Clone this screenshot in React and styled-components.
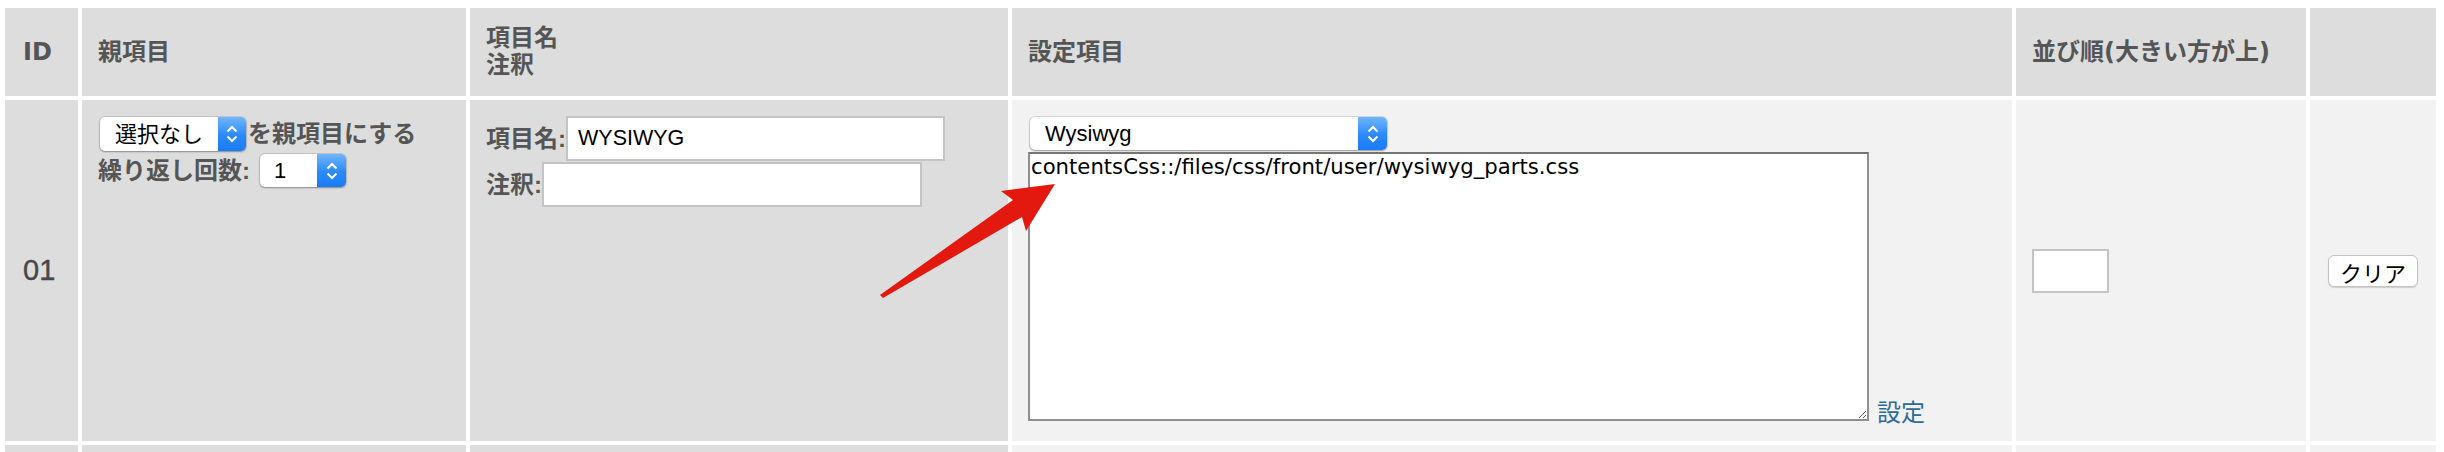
import React from 'react';
import styled, { createGlobalStyle } from 'styled-components';

const SANS = `"Liberation Sans", "Noto Sans CJK JP", sans-serif`;
const WIDE = `"DejaVu Sans", "Noto Sans CJK JP", sans-serif`;

const GlobalStyle = createGlobalStyle`
  html, body {
    margin: 0;
    padding: 0;
    background: #fff;
    overflow: hidden;
  }
`;

const columns = [
  { key: 'id', label: 'ID', width: 73 },
  { key: 'parent', label: '親項目', width: 384 },
  { key: 'name', label: ['項目名', '注釈'], width: 538 },
  { key: 'setting', label: '設定項目', width: 1000 },
  { key: 'order', label: '並び順(大きい方が上)', width: 290 },
  { key: 'action', label: '', width: 126 },
];

export default function App() {
  return (
    <Page>
      <GlobalStyle />
      <Table>
        <colgroup>
          {columns.map((c) => (
            <col key={c.key} style={{ width: c.width }} />
          ))}
        </colgroup>
        <thead>
          <HeadRow>
            {columns.map((c) => (
              <Th key={c.key}>
                {Array.isArray(c.label)
                  ? c.label.map((l, i) => <div key={i}>{l}</div>)
                  : c.label}
              </Th>
            ))}
          </HeadRow>
        </thead>
        <tbody>
          <BodyRow $h={341}>
            <Td $middle>
              <IdText>01</IdText>
            </Td>
            <Td>
              <Line>
                <Select width={146} height={34} stepper={28} value="選択なし" />
                <Label>を親項目にする</Label>
              </Line>
              <Line $gap={2}>
                <Label>繰り返し回数:</Label>
                <Select width={86} height={33} stepper={29} value="1" ml={10} pl={14} />
              </Line>
            </Td>
            <Td>
              <Line>
                <Label>項目名:</Label>
                <TextInput $w={379} $h={45} defaultValue="WYSIWYG" />
              </Line>
              <Line $gap={1}>
                <Label>注釈:</Label>
                <TextInput $w={380} $h={45} defaultValue="" />
              </Line>
            </Td>
            <Td $light>
              <SettingStack>
                <Select width={357} height={33} stepper={29} value="Wysiwyg" />
                <TextRow>
                  <TextArea defaultValue="contentsCss::/files/css/front/user/wysiwyg_parts.css" />
                  <SettingLink href="#">設定</SettingLink>
                </TextRow>
              </SettingStack>
            </Td>
            <Td $light $middle>
              <TextInput $w={77} $h={44} defaultValue="" />
            </Td>
            <Td $light $middle $center>
              <ClearButton type="button">クリア</ClearButton>
            </Td>
          </BodyRow>
          <BodyRow $h={200}>
            <Td />
            <Td />
            <Td />
            <Td $light />
            <Td $light />
            <Td $light />
          </BodyRow>
        </tbody>
      </Table>
      <Arrow viewBox="0 0 2444 452" aria-hidden="true">
        <polygon
          points="880,295 1013,200 1001,191 1055,184 1026,231 1022,217 883,298"
          fill="#e3180f"
        />
      </Arrow>
    </Page>
  );
}

function Select({ width, height, stepper, value, ml = 2, pl = 15 }) {
  return (
    <SelectWrap $w={width} $h={height} $ml={ml}>
      <NativeSelect defaultValue={value} $pl={pl}>
        <option value={value}>{value}</option>
      </NativeSelect>
      <Stepper $w={stepper}>
        <svg width="12" height="20" viewBox="0 0 12 20">
          <path d="M1.5 7.5 L6 3 L10.5 7.5 M1.5 12.5 L6 17 L10.5 12.5" fill="none" stroke="#fff" strokeWidth="2" />
        </svg>
      </Stepper>
    </SelectWrap>
  );
}

const Page = styled.div`
  position: relative;
  padding: 4px 0 0 1px;
  font-family: ${SANS};
`;

const Table = styled.table`
  table-layout: fixed;
  width: 2439px;
  border-collapse: separate;
  border-spacing: 4px;
`;

const HeadRow = styled.tr`
  height: 88px;
`;

const BodyRow = styled.tr`
  height: ${(p) => p.$h}px;
`;

const Th = styled.th`
  background: #dddddd;
  color: #555;
  font-family: ${WIDE};
  font-size: 24px;
  font-weight: bold;
  line-height: 27px;
  text-align: left;
  vertical-align: middle;
  padding: 0 16px;
  white-space: nowrap;
  &:first-child {
    padding-left: 18px;
  }
`;

const Td = styled.td`
  background: ${(p) => (p.$light ? '#f2f2f2' : '#dddddd')};
  vertical-align: ${(p) => (p.$middle ? 'middle' : 'top')};
  text-align: ${(p) => (p.$center ? 'center' : 'left')};
  padding: 16px 16px;
  color: #555;
  font-size: 24px;
  font-weight: bold;
  line-height: 27px;
  &:first-child {
    padding-left: 18px;
  }
`;

const IdText = styled.span`
  font-size: 29px;
  font-weight: normal;
  color: #474747;
  -webkit-text-stroke: 0.4px #474747;
`;

const Line = styled.div`
  display: flex;
  align-items: center;
  margin-top: ${(p) => p.$gap || 0}px;
`;

const Label = styled.span`
  flex: none;
  white-space: nowrap;
`;

const SelectWrap = styled.span`
  display: inline-flex;
  flex: none;
  box-sizing: border-box;
  width: ${(p) => p.$w}px;
  height: ${(p) => p.$h}px;
  margin: 1px 2px 0 ${(p) => p.$ml}px;
  background: #fff;
  border-radius: 5px;
  overflow: hidden;
  box-shadow: 0 0 0 1px rgba(0, 0, 0, 0.1), 0 1px 2px rgba(0, 0, 0, 0.3);
`;

const NativeSelect = styled.select`
  appearance: none;
  -webkit-appearance: none;
  flex: 1;
  min-width: 0;
  margin: 0;
  padding: 0 0 0 ${(p) => p.$pl}px;
  border: none;
  outline: none;
  background: transparent;
  font-family: ${SANS};
  font-size: 22px;
  font-weight: normal;
  color: #000;
`;

const Stepper = styled.span`
  flex: none;
  width: ${(p) => p.$w}px;
  display: flex;
  align-items: center;
  justify-content: center;
  background: linear-gradient(#70b6fb, #2a89f9 55%, #1a7cf6);
`;

const TextInput = styled.input`
  flex: none;
  box-sizing: border-box;
  width: ${(p) => p.$w}px;
  height: ${(p) => p.$h}px;
  margin: 0;
  padding: 0 10px;
  border: 2px solid #c4c4c4;
  border-radius: 0;
  background: #fff;
  font-family: ${SANS};
  font-size: 21.5px;
  font-weight: normal;
  color: #000;
  outline: none;
`;

const SettingStack = styled.div`
  display: flex;
  flex-direction: column;
  align-items: flex-start;
  gap: 2px;
`;

const TextRow = styled.div`
  display: flex;
  align-items: flex-end;
`;

const TextArea = styled.textarea`
  box-sizing: border-box;
  width: 841px;
  height: 269px;
  margin: 0;
  padding: 0 1px;
  border: 2px solid #8f8f8f;
  border-top-color: #747474;
  background: #fff;
  font-family: "DejaVu Sans", sans-serif;
  font-size: 21.2px;
  line-height: 26px;
  color: #000;
  resize: both;
  outline: none;
`;

const SettingLink = styled.a`
  margin: 0 0 -4px 8px;
  color: #2d6b98;
  font-size: 24px;
  font-weight: normal;
  line-height: 24px;
  text-decoration: none;
`;

const ClearButton = styled.button`
  box-sizing: border-box;
  width: 90px;
  height: 32px;
  padding: 0;
  background: #fff;
  border: 1px solid #c3c3c3;
  border-radius: 6px;
  box-shadow: 0 1px 1px rgba(0, 0, 0, 0.15);
  font-family: ${SANS};
  font-size: 22px;
  color: #000;
`;

const Arrow = styled.svg`
  position: absolute;
  left: 0;
  top: 0;
  width: 2444px;
  height: 452px;
  pointer-events: none;
`;
